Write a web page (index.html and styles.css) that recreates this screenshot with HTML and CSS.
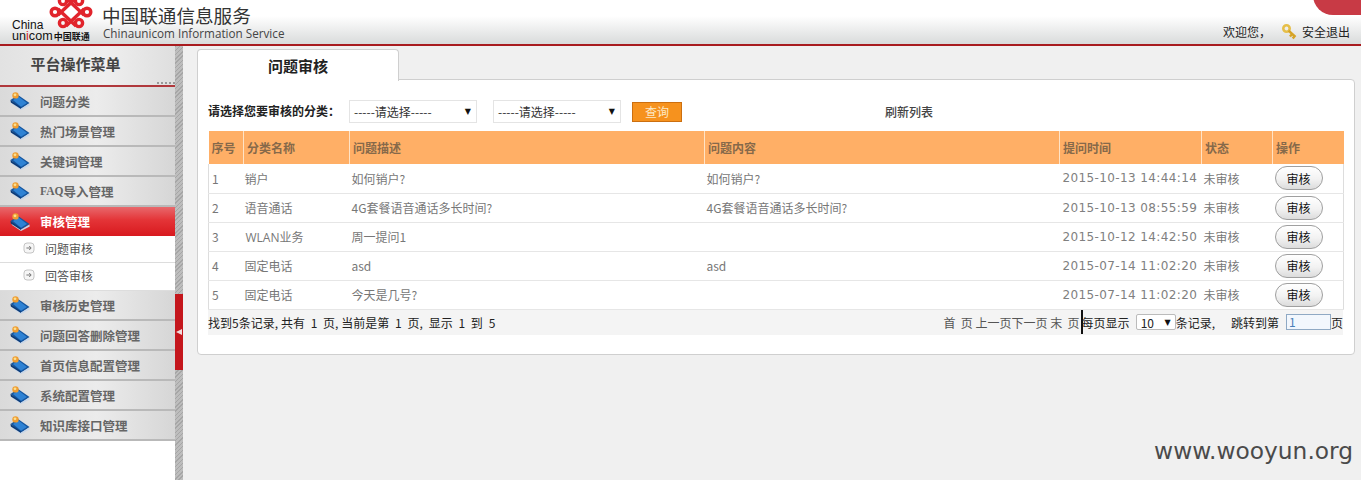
FILE: index.html
```html
<!DOCTYPE html>
<html lang="zh">
<head>
<meta charset="utf-8">
<title>中国联通信息服务</title>
<link rel="stylesheet" href="styles.css">
</head>
<body>
<svg class="defs" width="0" height="0" aria-hidden="true">
  <symbol id="book" viewBox="0 0 20 18">
    <path d="M0.5 8 L8 3 L19.5 11 L11 16.8 Z" fill="#14559f"/>
    <path d="M3 8 L8.5 4.6 L17 11 L11 14.8 Z" fill="#2e82d4"/>
    <path d="M1.5 10 L11 16.4 L19.5 11.4 L19.7 13.4 L11 18 L2 12 Z" fill="#c7d6e8"/>
    <path d="M0.5 8 L11 15.4 L11 17 L0.8 10.4 Z" fill="#0c3a76"/>
    <circle cx="5.5" cy="3.4" r="3.2" fill="#ef9d32"/>
    <circle cx="5" cy="2.8" r="1.4" fill="#fbe08f"/>
  </symbol>
  <symbol id="arrow" viewBox="0 0 12 12">
    <rect x="1" y="1" width="10" height="10" rx="3" fill="#f6f6f6" stroke="#c4c4c4"/>
    <path d="M3.4 6 H8 M6.2 4 L8.2 6 L6.2 8" fill="none" stroke="#777" stroke-width="1"/>
  </symbol>
</svg>

<header class="top">
  <svg class="knot" viewBox="0 0 46 30" aria-hidden="true">
    <g fill="none" stroke="#e1242c" stroke-width="3.4">
      <circle cx="6" cy="12" r="3.8"/>
      <circle cx="38" cy="12" r="3.8"/>
      <circle cx="14" cy="23" r="3.6"/>
      <circle cx="30" cy="23" r="3.6"/>
      <circle cx="14" cy="1" r="3.6"/>
      <circle cx="30" cy="1" r="3.6"/>
      <path d="M9 9 L27 26 M35 9 L17 26 M9 15 L27 -2 M35 15 L17 -2"/>
    </g>
  </svg>
  <div class="brand-mark">
    <span class="china">China</span>
    <span class="unicom">un<b>i</b>com<em>中国联通</em></span>
  </div>
  <div class="brand-text">
    <div class="brand-cn">中国联通信息服务</div>
    <div class="brand-en">Chinaunicom Information Service</div>
  </div>
  <div class="corner"></div>
  <div class="user">
    <span>欢迎您，</span>
    <svg class="key" viewBox="0 0 16 16" aria-hidden="true">
      <circle cx="4.5" cy="4.5" r="3.2" fill="none" stroke="#e6bf4a" stroke-width="2.6"/>
      <path d="M6.6 6.6 L13.5 13 M10 10 L8 12.5 M12.5 12 L10.8 14.5" fill="none" stroke="#d6a326" stroke-width="2.4"/>
    </svg>
    <span>安全退出</span>
  </div>
</header>

<div class="main">
  <aside class="side">
    <div class="side-title">平台操作菜单<span class="grip"></span></div>
    <ul class="menu">
      <li class="item"><svg class="book"><use href="#book"/></svg>问题分类</li>
      <li class="item"><svg class="book"><use href="#book"/></svg>热门场景管理</li>
      <li class="item"><svg class="book"><use href="#book"/></svg>关键词管理</li>
      <li class="item"><svg class="book"><use href="#book"/></svg><span class="faq">FAQ</span>导入管理</li>
      <li class="item active"><svg class="book"><use href="#book"/></svg>审核管理</li>
      <li class="sub"><svg class="arrow"><use href="#arrow"/></svg>问题审核</li>
      <li class="sub sub-last"><svg class="arrow"><use href="#arrow"/></svg>回答审核</li>
      <li class="item"><svg class="book"><use href="#book"/></svg>审核历史管理</li>
      <li class="item"><svg class="book"><use href="#book"/></svg>问题回答删除管理</li>
      <li class="item"><svg class="book"><use href="#book"/></svg>首页信息配置管理</li>
      <li class="item"><svg class="book"><use href="#book"/></svg>系统配置管理</li>
      <li class="item"><svg class="book"><use href="#book"/></svg>知识库接口管理</li>
    </ul>
  </aside>
  <div class="split"><div class="handle"><span class="tri"></span></div></div>
  <main class="content">
    <div class="tab">问题审核</div>
    <section class="panel">
      <form class="filter">
        <label class="filter-label">请选择您要审核的分类：</label>
        <div class="sel">-----请选择-----<span class="caret">▼</span></div>
        <div class="sel">-----请选择-----<span class="caret">▼</span></div>
        <button type="button" class="query">查询</button>
        <span class="refresh">刷新列表</span>
      </form>
      <table class="grid">
        <colgroup>
          <col class="c1"><col class="c2"><col class="c3"><col class="c4"><col class="c5"><col class="c6"><col class="c7">
        </colgroup>
        <thead>
          <tr><th>序号</th><th>分类名称</th><th>问题描述</th><th>问题内容</th><th>提问时间</th><th>状态</th><th>操作</th></tr>
        </thead>
        <tbody>
          <tr><td>1</td><td>销户</td><td>如何销户?</td><td>如何销户?</td><td class="time">2015-10-13 14:44:14</td><td>未审核</td><td><button type="button" class="audit">审核</button></td></tr>
          <tr><td>2</td><td>语音通话</td><td>4G套餐语音通话多长时间?</td><td>4G套餐语音通话多长时间?</td><td class="time">2015-10-13 08:55:59</td><td>未审核</td><td><button type="button" class="audit">审核</button></td></tr>
          <tr><td>3</td><td class="wlan">WLAN业务</td><td>周一提问1</td><td></td><td class="time">2015-10-12 14:42:50</td><td>未审核</td><td><button type="button" class="audit">审核</button></td></tr>
          <tr><td>4</td><td>固定电话</td><td>asd</td><td>asd</td><td class="time">2015-07-14 11:02:20</td><td>未审核</td><td><button type="button" class="audit">审核</button></td></tr>
          <tr><td>5</td><td>固定电话</td><td>今天是几号?</td><td></td><td class="time">2015-07-14 11:02:20</td><td>未审核</td><td><button type="button" class="audit">审核</button></td></tr>
        </tbody>
      </table>
      <div class="pager">
        <span class="summary">找到5条记录, 共有&nbsp; 1&nbsp; 页, 当前是第&nbsp; 1&nbsp; 页,&nbsp; 显示&nbsp; 1&nbsp; 到&nbsp; 5</span>
        <div class="pager-right">
          <span class="links">首 &nbsp;页 上一页下一页 末 &nbsp;页</span>
          <span class="bar"></span>
          <span>每页显示</span>
          <span class="size">10<span class="caret">▼</span></span>
          <span>条记录,</span>
          <span class="jump">跳转到第</span>
          <span class="page-input">1</span>
          <span>页</span>
        </div>
      </div>
    </section>
    <div class="mark">www.wooyun.org</div>
  </main>
</div>
</body>
</html>
```
FILE: styles.css
```css
* { box-sizing: border-box; }
html, body { margin: 0; height: 100%; overflow: hidden; }
body {
  font-family: "Noto Sans CJK SC", "Liberation Sans", sans-serif;
  font-size: 12px;
  color: #222;
  background: #f0f0f0;
  display: flex;
  flex-direction: column;
}
.defs { position: absolute; }

/* header */
.top {
  height: 46px;
  flex: none;
  position: relative;
  display: flex;
  background: linear-gradient(#fff 0, #fff 16px, #d9dbdb 44px);
  border-bottom: 2px solid #a81b1f;
  overflow: hidden;
}
.knot { position: absolute; left: 49px; top: 0; width: 46px; height: 30px; }
.brand-mark {
  width: 103px;
  flex: none;
  padding: 20px 0 0 12px;
  font-family: "Liberation Sans", sans-serif;
  color: #111;
  line-height: 10.5px;
}
.china { display: block; font-size: 12px; }
.unicom { display: block; font-size: 12.6px; white-space: nowrap; }
.unicom b { color: #d81e26; font-weight: 400; }
.unicom em {
  margin-left: 1px;
  font-style: normal;
  font-size: 9px;
  font-weight: 700;
  font-family: "Noto Sans CJK SC", sans-serif;
}
.brand-text { padding-top: 3px; }
.brand-cn { font-size: 18.6px; line-height: 24px; color: #333; white-space: nowrap; margin-left: -1px; }
.brand-en {
  font-family: "Open Sans", sans-serif;
  font-size: 11.7px;
  line-height: 12px;
  color: #444;
  white-space: nowrap;
}
.corner {
  position: absolute;
  right: 0;
  top: -30px;
  width: 48px;
  height: 45px;
  background: #c83a45;
  border-bottom-left-radius: 20px;
}
.user {
  position: absolute;
  right: 11px;
  top: 23px;
  display: flex;
  align-items: center;
  line-height: 18px;
  color: #222;
}
.key { width: 16px; height: 16px; margin: 0 4px 0 11px; }

/* layout */
.main { flex: 1; display: flex; min-height: 0; }
.side { width: 175px; flex: none; background: #fff; }
.side-title {
  height: 41px;
  position: relative;
  text-align: center;
  padding-right: 24px;
  font-size: 15px;
  font-weight: 700;
  line-height: 35px;
  color: #444;
  background: linear-gradient(90deg, #e2e2e2, #efefef 60%, #dedede);
  border-bottom: 2px solid #b0383c;
}
.grip {
  position: absolute;
  right: 0;
  bottom: 1px;
  width: 18px;
  height: 2px;
  background: repeating-linear-gradient(90deg, #999 0 2px, transparent 2px 4px);
}
.menu { list-style: none; margin: 0; padding: 0; }
.item {
  height: 30px;
  display: flex;
  align-items: center;
  padding-left: 10px;
  font-size: 12.5px;
  font-weight: 700;
  color: #666;
  white-space: nowrap;
  background: linear-gradient(90deg, #dadada, #ececec 55%, #d6d6d6);
  border-bottom: 2px solid #b9b9b9;
}
.item.active {
  color: #fff;
  height: 29px;
  background: linear-gradient(#e8686c, #e43437 45%, #d8191e);
  border-bottom: 0;
}
.faq { font-family: "Liberation Serif", serif; font-size: 11.5px; }
.book { width: 20px; height: 18px; margin-right: 10px; flex: none; }
.sub {
  height: 27px;
  padding: 0 0 2px 23px;
  display: flex;
  align-items: center;
  color: #555;
  font-size: 12px;
  background: #fff;
  border-bottom: 1px solid #ddd;
}
.sub-last { height: 28px; padding-bottom: 3px; }
.arrow { width: 12px; height: 12px; margin-right: 10px; flex: none; }

.split {
  width: 8px;
  flex: none;
  background: repeating-linear-gradient(135deg, #a6a6a6 0 1px, #bdbdbd 1px 3px);
  padding-top: 248px;
}
.handle {
  height: 76px;
  background: #c4161c;
  display: flex;
  align-items: center;
  justify-content: center;
}
.tri {
  width: 0;
  height: 0;
  border: 3.5px solid transparent;
  border-left: 0;
  border-right: 6px solid #f1dcdc;
}

/* content */
.content { flex: 1; position: relative; padding: 3px 6px 0 14px; min-width: 0; }
.tab {
  width: 202px;
  height: 32px;
  position: relative;
  z-index: 1;
  margin-bottom: -2px;
  text-align: center;
  font-size: 15px;
  font-weight: 700;
  line-height: 31px;
  color: #222;
  background: #fff;
  border: 1px solid #cfcfcf;
  border-bottom: 0;
  border-radius: 4px 4px 0 0;
}
.panel {
  height: 276px;
  padding: 0 10px;
  background: #fff;
  border: 1px solid #cfcfcf;
  border-radius: 0 4px 4px 4px;
}
.filter {
  height: 51px;
  display: flex;
  align-items: center;
  padding-top: 12px;
}
.filter-label { width: 141px; margin-bottom: 2px; font-weight: 700; color: #222; white-space: nowrap; }
.sel {
  width: 128px;
  height: 23px;
  margin-right: 16px;
  padding: 0 5px 0 4px;
  display: flex;
  justify-content: space-between;
  align-items: center;
  color: #333;
  border: 1px solid #e4e4e4;
  white-space: nowrap;
}
.caret { font-size: 8px; color: #111; font-family: "DejaVu Sans", sans-serif; }
.query {
  width: 50px;
  height: 20px;
  margin-left: -5px;
  padding: 0;
  font: inherit;
  color: #fde9c6;
  background: #f6921e;
  border: 1px solid #cc6f10;
}
.refresh { margin-left: 203px; color: #444; font-weight: 500; }

.grid { width: 1135px; border-collapse: collapse; table-layout: fixed; }
.c1 { width: 35px; } .c2 { width: 106px; } .c3 { width: 355px; } .c4 { width: 355px; }
.c5 { width: 142px; } .c6 { width: 71px; } .c7 { width: 71px; }
.grid th {
  height: 33px;
  padding: 0 3px;
  text-align: left;
  font-size: 12px;
  font-weight: 700;
  color: #86694a;
  background: #ffaf66;
  border-left: 1px solid #ffe3c6;
}
.grid th:first-child { border-left: 0; }
.grid td {
  height: 29px;
  padding: 0 2px;
  color: #777;
  white-space: nowrap;
  border-bottom: 1px solid #e6e6e6;
}
.grid td:first-child { padding-left: 3px; border-left: 1px solid #ddd; }
.grid td:nth-child(2) { padding-left: 1px; }
.grid td:last-child { border-right: 1px solid #ddd; }
.grid td.time {
  padding-left: 3px;
  font-family: "DejaVu Sans", sans-serif;
  font-size: 12px;
  letter-spacing: .38px;
  color: #808080;
}
.grid td.wlan { padding-left: 2px; font-family: "Open Sans", "Noto Sans CJK SC", sans-serif; }
.audit {
  width: 48px;
  height: 24px;
  padding: 0;
  display: block;
  font: inherit;
  color: #111;
  background: linear-gradient(#fff, #f2f2f2 55%, #dcdcdc);
  border: 1px solid #9f9f9f;
  border-radius: 12px;
}

.pager {
  width: 1135px;
  height: 25px;
  display: flex;
  justify-content: space-between;
  align-items: center;
  background: #f4f4f4;
  color: #222;
  white-space: nowrap;
}
.summary { word-spacing: .2px; }
.pager-right { display: flex; align-items: center; height: 25px; }
.links { color: #555; }
.bar { width: 2px; height: 24px; background: #111; margin: 0 -1px 0 1px; }
.size {
  width: 40px;
  height: 16px;
  margin: 0 0 0 6px;
  padding: 0 4px;
  display: flex;
  justify-content: space-between;
  align-items: center;
  color: #222;
  background: #fff;
  border: 1px solid #bbb;
  border-radius: 2px;
}
.jump { margin-left: 16px; }
.page-input {
  width: 45px;
  height: 16px;
  margin-left: 7px;
  padding-left: 2px;
  line-height: 14px;
  color: #4a7fb8;
  background: #f2f7fd;
  border: 1px solid #8fa9c4;
}
.mark {
  position: absolute;
  right: 8px;
  bottom: 15px;
  font-family: "DejaVu Sans", sans-serif;
  font-size: 23.3px;
  line-height: 28px;
  color: #4a4a4a;
}
```
